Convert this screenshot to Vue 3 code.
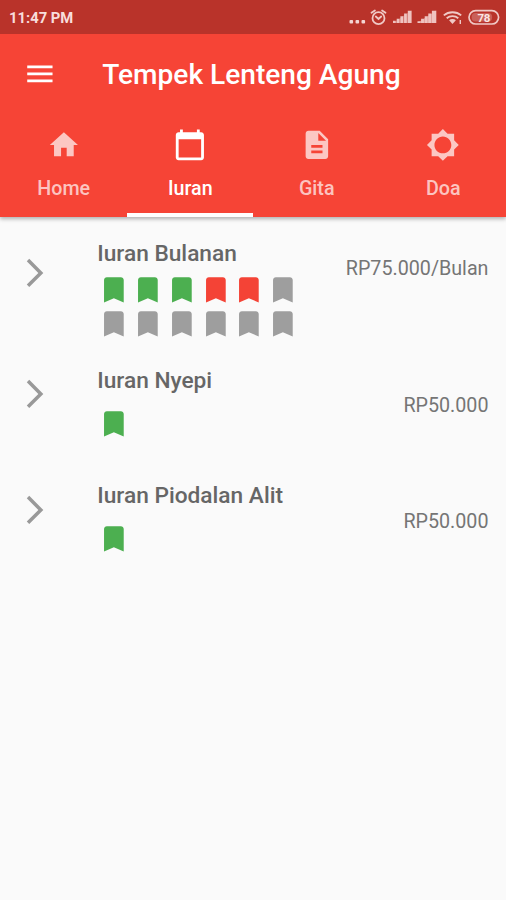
<template>
  <div class="screen">
    <header class="header">
      <!-- Status bar -->
      <div class="status-bar">
        <span class="clock">11:47 PM</span>
        <svg class="status-icons" viewBox="0 0 166 34" fill="none">
          <g fill="#f4d5d3">
            <rect x="9.5" y="20" width="3.6" height="3.6" rx="1" />
            <rect x="15.5" y="20" width="3.6" height="3.6" rx="1" />
            <rect x="21.5" y="20" width="3.6" height="3.6" rx="1" />
          </g>
          <g stroke="#f0c9c6" stroke-width="1.8" stroke-linecap="round">
            <circle cx="38.5" cy="18.2" r="6" />
            <path d="M31.5 12.8l3.4-2.4M45.5 12.8l-3.4-2.4M35.8 16.5l2.7 2.5 2.7-2.5" />
          </g>
          <g fill="#efc3c0">
            <path d="M53 23L71.5 10.5V23z" opacity=".45" />
            <path
              d="M53 20.8h2.7V23H53zM56.7 18.7h2.7V23h-2.7zM60.4 16.2h2.7V23h-2.7zM64.1 13.6h2.7V23h-2.7zM67.8 10.8h3.7V23h-3.7z" />
            <path
              d="M77.5 21.2h2.8V23h-2.8zM81.1 18.7h2.8V23h-2.8zM84.7 16.2h2.8V23h-2.8zM88.3 13.6h2.8V23h-2.8zM91.9 10.8h4.3V23h-4.3z" />
            <path d="M77.5 23L96.2 10.5V23z" opacity=".7" />
          </g>
          <g stroke="#f0c9c6" stroke-width="1.8">
            <path d="M103.8 15.4c4.8-4.2 12.6-4.2 17.4 0M106.7 18.2c3.2-2.8 8.4-2.8 11.6 0" />
            <path d="M109.1 20.2c1.9-1.6 4.9-1.6 6.8 0l-3.4 3.8z" fill="#f0c9c6" stroke="none" />
            <path d="M120.3 20v4" stroke-width="1.4" />
          </g>
          <rect x="129" y="10.6" width="29.6" height="13.4" rx="6.7" stroke="#f0c9c6" stroke-width="1.7" />
          <rect x="131.6" y="13" width="20.5" height="8.6" rx="4" fill="#f0c9c6" opacity=".3" />
          <text class="battery" x="143.7" y="21.5" text-anchor="middle">78</text>
        </svg>
      </div>

      <!-- App bar -->
      <div class="app-bar">
        <svg class="icon" viewBox="0 0 24 24">
          <path d="M3 18h18v-2H3v2zm0-5h18v-2H3v2zm0-7v2h18V6H3z" />
        </svg>
        <h1 class="title">Tempek Lenteng Agung</h1>
      </div>

      <!-- Tabs -->
      <nav class="tabs">
        <button v-for="tab in tabs" :key="tab.label" type="button" class="tab"
          :class="{ active: activeTab === tab.label }" @click="activeTab = tab.label">
          <svg class="icon" viewBox="0 0 24 24">
            <path :d="tab.icon" />
          </svg>
          <span class="tab-label">{{ tab.label }}</span>
        </button>
      </nav>
    </header>

    <main class="list">
      <section v-for="item in items" :key="item.name" class="item" :class="{ monthly: item.monthly }">
        <svg class="icon chevron" viewBox="0 0 24 24">
          <path d="M6.23 20.23L8 22l10-10L8 2 6.23 3.77 14.46 12z" />
        </svg>
        <div class="content">
          <h2 class="name">{{ item.name }}</h2>
          <div class="marks">
            <svg v-for="(mark, index) in item.marks" :key="index" class="icon" :class="mark" viewBox="0 0 24 24">
              <path d="M17 3H7c-1.1 0-1.99.9-1.99 2L5 21l7-3 7 3V5c0-1.1-.9-2-2-2z" />
            </svg>
          </div>
        </div>
        <span class="price">{{ item.price }}</span>
      </section>
    </main>
  </div>
</template>

<script setup>
import { ref } from 'vue'

const activeTab = ref('Iuran')

const tabs = [
  { label: 'Home', icon: 'M10 20v-6h4v6h5v-8h3L12 3 2 12h3v8z' },
  {
    label: 'Iuran',
    icon: 'M20 3h-1V1h-2v2H7V1H5v2H4c-1.1 0-2 .9-2 2v16c0 1.1.9 2 2 2h16c1.1 0 2-.9 2-2V5c0-1.1-.9-2-2-2zm0 18H4V8h16v13z'
  },
  {
    label: 'Gita',
    icon: 'M14 2H6c-1.1 0-1.99.9-1.99 2L4 20c0 1.1.89 2 1.99 2H18c1.1 0 2-.9 2-2V8l-6-6zm2 16H8v-2h8v2zm0-4H8v-2h8v2zm-3-5V3.5L18.5 9H13z'
  },
  {
    label: 'Doa',
    icon: 'M20 15.31L23.31 12 20 8.69V4h-4.69L12 .69 8.69 4H4v4.69L.69 12 4 15.31V20h4.69L12 23.31 15.31 20H20v-4.69zM12 18c-3.31 0-6-2.69-6-6s2.69-6 6-6 6 2.69 6 6-2.69 6-6 6z'
  }
]

// One mark per payment: paid, late or open
const items = [
  {
    name: 'Iuran Bulanan',
    price: 'RP75.000/Bulan',
    monthly: true,
    marks: [
      'paid', 'paid', 'paid', 'late', 'late', 'open',
      'open', 'open', 'open', 'open', 'open', 'open'
    ]
  },
  { name: 'Iuran Nyepi', price: 'RP50.000', marks: ['paid'] },
  { name: 'Iuran Piodalan Alit', price: 'RP50.000', marks: ['paid'] }
]
</script>

<style>
body {
  margin: 0;
  background: #fafafa;
}
</style>

<style scoped>
.screen {
  min-height: 900px;
  background: #fafafa;
  font-family: Roboto, 'Liberation Sans', sans-serif;
}

.icon {
  display: block;
  flex: none;
  width: 33.75px;
  height: 33.75px;
  fill: currentColor;
}

.header {
  height: 217px;
  background: #f64436;
  color: #fff;
  box-shadow: 0 2px 4px rgba(0, 0, 0, 0.3);
}

.status-bar {
  display: flex;
  justify-content: space-between;
  height: 34px;
  background: #b9332a;
}

.clock {
  padding-left: 9px;
  font-size: 14.8px;
  font-weight: 700;
  line-height: 37px;
  color: #f8dedc;
}

.status-icons {
  width: 166px;
  height: 34px;
}

.battery {
  font-size: 11.5px;
  font-weight: 700;
  letter-spacing: -0.5px;
  fill: #fbe6e4;
}

.app-bar {
  display: flex;
  align-items: center;
  height: 79px;
  padding-left: 23px;
}

.title {
  margin: 3px 0 0 45.5px;
  font-size: 28.1px;
  font-weight: 500;
  line-height: 32px;
  white-space: nowrap;
}

.tabs {
  display: grid;
  grid-template-columns: repeat(4, 1fr);
  height: 104px;
}

.tab {
  display: flex;
  flex-direction: column;
  align-items: center;
  gap: 15px;
  padding: 15px 0 0 1px;
  border: 0;
  border-bottom: 4px solid transparent;
  background: none;
  color: rgba(255, 255, 255, 0.7);
  font-family: inherit;
}

.tab.active {
  border-bottom-color: #fff;
  color: #fff;
}

.tab-label {
  font-size: 19.7px;
  font-weight: 500;
  line-height: 24px;
}

.list {
  padding-top: 21.4px;
}

.item {
  display: flex;
  align-items: flex-start;
  height: 115.3px;
  padding: 0 17.5px 0 18px;
}

.item.monthly {
  height: 126.7px;
}

.chevron {
  margin-top: 12.4px;
  color: #999;
}

.content {
  flex: 1;
  margin-left: 45.5px;
}

.name {
  margin: 0;
  font-size: 22.7px;
  font-weight: 500;
  line-height: 31px;
  color: #666;
}

.marks {
  display: flex;
  flex-wrap: wrap;
  width: 203px;
  padding-top: 11px;
}

.price {
  margin-top: 29.4px;
  font-size: 19.7px;
  line-height: 24px;
  color: #757575;
}

.monthly .chevron {
  margin-top: 17.8px;
}

.monthly .marks {
  padding-top: 4px;
}

.monthly .price {
  margin-top: 18.2px;
}

.paid {
  color: #4caf50;
}

.late {
  color: #f44336;
}

.open {
  color: #9e9e9e;
}
</style>
